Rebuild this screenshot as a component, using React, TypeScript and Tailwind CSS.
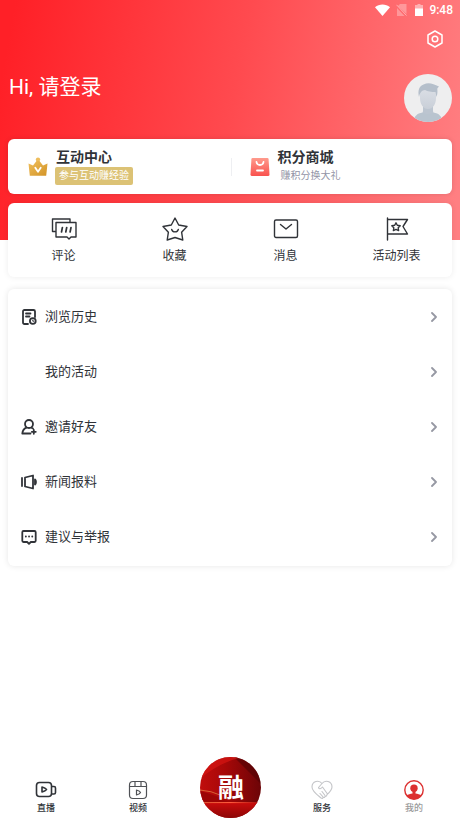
import type { ReactNode } from "react";

type IconProps = { children: ReactNode; className: string; box?: string; width?: number };

function Icon({ children, className, box = "0 0 24 24", width = 1.8 }: IconProps) {
  return (
    <svg
      viewBox={box}
      className={className}
      fill="none"
      stroke="currentColor"
      strokeWidth={width}
      strokeLinecap="round"
      strokeLinejoin="round"
      aria-hidden="true"
    >
      {children}
    </svg>
  );
}

function StatusBar() {
  return (
    <div className="flex h-5 items-center justify-end pr-[7px] text-xs font-medium">
      <svg viewBox="0 0 15 12" className="h-3 w-[15px]" fill="#fff" aria-hidden="true">
        <path d="M0 3.2C4.2-.4 10.8-.4 15 3.2L7.5 12z" />
      </svg>
      <svg viewBox="0 0 11 12" className="ml-[6px] h-3 w-[11px]" aria-hidden="true">
        <path d="M4 0h6.5v10L2 2zM1 4l7.5 8H1z" fill="#fff" opacity=".3" />
        <path d="M.5.8l10 10.7" stroke="#fff" opacity=".45" />
      </svg>
      <svg viewBox="0 0 8 12" className="ml-2 h-3 w-2" fill="#fff" aria-hidden="true">
        <path d="M2.5 0h3v1H8v4H0V1h2.5z" opacity=".45" />
        <path d="M0 4.500h8V12H0z" />
      </svg>
      <span className="ml-[6px]">9:48</span>
    </div>
  );
}

function Avatar() {
  return (
    <svg viewBox="0 0 48 48" className="size-12" role="img" aria-label="头像">
      <defs>
        <clipPath id="face">
          <circle cx="24" cy="24" r="24" />
        </clipPath>
        <linearGradient id="skin" x1="0" y1="0" x2="0" y2="1">
          <stop offset="0" stopColor="#dadee5" />
          <stop offset="1" stopColor="#c9cfd8" />
        </linearGradient>
      </defs>
      <g clipPath="url(#face)">
        <path d="M0 0h48v48H0z" fill="#eeeeef" />
        <path d="M19 30h10v7l1 4-6 3-6-3 1-4z" fill="#bcc5d0" />
        <path d="M10 48c0-6 3-8.500 8.500-9.500q5.500 3 11 0C35 39.500 38 42 38 48z" fill="#b9c4cf" />
        <path d="M16 15h16v9c0 6-3 11-8 11s-8-5-8-11z" fill="url(#skin)" />
        <path d="M15 23c-1.500-6 0-11 4.500-12.500C25 8 29 10 35 12.500c-1 1-1.500 1.500-1.700 2.500.3 3 .2 5-.8 8l-1-5c-4 0-8-.5-10.500-2-3 .5-5 2-6 7z" fill="#b5bfcb" />
      </g>
    </svg>
  );
}

function Crown() {
  return (
    <svg viewBox="0 0 20 20" className="size-5" aria-hidden="true">
      <defs>
        <linearGradient id="gold" x1="0" y1="0" x2="1" y2="1">
          <stop offset="0" stopColor="#f0bf5c" />
          <stop offset="1" stopColor="#d29326" />
        </linearGradient>
      </defs>
      <circle cx="10" cy="2.600" r="2.200" fill="#eebd5c" />
      <path d="M.5 6.500l4.500 2L8.500 4h3L15 8.500l4.500-2-1.300 12.300H1.800z" fill="url(#gold)" />
      <path d="M7.300 10.800l2.700 4 2.700-4" fill="none" stroke="#fff" strokeWidth="1.800" strokeLinecap="round" strokeLinejoin="round" />
    </svg>
  );
}

function Bag() {
  return (
    <svg viewBox="0 0 20 20" className="size-5" aria-hidden="true">
      <defs>
        <linearGradient id="coral" x1="0" y1="0" x2="0" y2="1">
          <stop offset="0" stopColor="#ff9b8d" />
          <stop offset="1" stopColor="#f9524e" />
        </linearGradient>
      </defs>
      <path d="M2.500 1h15q1 0 1.100 1l.9 15.500q0 1.500-1.500 1.500H2Q.5 19 .5 17.500L1.400 2q.1-1 1.100-1z" fill="url(#coral)" />
      <path d="M6.500 5c.5 4 6.500 4 7 0M7 13.500h6" fill="none" stroke="#fff" strokeWidth="1.800" strokeLinecap="round" />
    </svg>
  );
}

const shortcuts: { label: string; icon: ReactNode }[] = [
  {
    label: "评论",
    icon: (
      <Icon className="h-6 w-[26px]" box="0 0 26 24" width={1.4}>
        <path d="M4 14.500H1.500V2H19v3M5 5.500h20V20h-5l-2 2-2-2H5z" />
        <path d="M11.400 10.500l-.9 4.500M15.700 10.500l-.9 4.500M20 10.500l-.9 4.500" strokeWidth="1.700" />
      </Icon>
    ),
  },
  {
    label: "收藏",
    icon: (
      <Icon className="h-6 w-[26px]" box="0 0 26 24" width={1.4}>
        <path d="M13 1l3.700 7L25 9.500l-5.400 5.700 1.200 7.800L13 20.500 5.200 23l1.200-7.800L1 9.500 9.300 8z" />
        <path d="M9.700 12.500c1 3.200 5.600 3.200 6.600 0" />
      </Icon>
    ),
  },
  {
    label: "消息",
    icon: (
      <Icon className="h-6 w-[26px]" box="0 0 26 24" width={1.4}>
        <rect x="1.500" y="3" width="23" height="17.500" rx="1.500" />
        <path d="M7.500 7.500l5.500 4.500 5.500-4.500" />
      </Icon>
    ),
  },
  {
    label: "活动列表",
    icon: (
      <Icon className="h-6 w-[26px]" box="0 0 26 24" width={1.4}>
        <path d="M3.500 1v22M3.500 2.500h20l-4.500 7 4.500 7.500h-20" />
        <path d="M12 5.800l1.300 2.500 2.900.5-2 2 .4 2.800-2.600-1.200-2.600 1.200.4-2.800-2-2 2.900-.5z" />
      </Icon>
    ),
  },
];

const rows: { label: string; icon?: ReactNode }[] = [
  {
    label: "浏览历史",
    icon: (
      <Icon className="size-4" box="0 0 16 16" width={1.8}>
        <path d="M7 15H3.500Q2 15 2 13.500v-11Q2 1 3.500 1h9Q14 1 14 2.500V8M5 4.500h4.500M5 7.500h3.500" />
        <circle cx="11.800" cy="12" r="2.900" />
        <path d="M11.800 11v1.200h1" strokeWidth="1" />
      </Icon>
    ),
  },
  { label: "我的活动" },
  {
    label: "邀请好友",
    icon: (
      <Icon className="size-4" box="0 0 16 16" width={1.8}>
        <circle cx="8" cy="5" r="4" />
        <path d="M5.500 8.700C2.500 10 1.500 12 1.300 14.500h8.200M10.500 8.700l1.500.9M12.800 10.800v4M10.800 12.800h4" />
      </Icon>
    ),
  },
  {
    label: "新闻报料",
    icon: (
      <Icon className="size-4" box="0 0 16 16" width={1.8}>
        <path d="M4 3.500L12 1.500v13L4 12.500zM1 4v8M14 5.500c1.300 1 1.300 4 0 5z" />
      </Icon>
    ),
  },
  {
    label: "建议与举报",
    icon: (
      <Icon className="size-4" box="0 0 16 16" width={1.8}>
        <path d="M2.500 2h11q1.200 0 1.200 1.200v8.600q0 1.200-1.200 1.200h-3.700L8 14.800 6.200 13H2.500q-1.200 0-1.200-1.200V3.200Q1.300 2 2.500 2z" />
        <path d="M4.800 7.500h.1M8 7.500h.1M11.200 7.500h.1" />
      </Icon>
    ),
  },
];

function Emblem() {
  return (
    <svg viewBox="0 0 61 61" className="size-[61px]" role="img" aria-label="融">
      <defs>
        <clipPath id="disc">
          <circle cx="30.500" cy="30.500" r="30.500" />
        </clipPath>
        <linearGradient id="ruby" x1="0" y1="0" x2="1" y2="0">
          <stop offset="0" stopColor="#c00d0d" />
          <stop offset=".4" stopColor="#a80808" />
          <stop offset="1" stopColor="#6c0407" />
        </linearGradient>
        <linearGradient id="floor" x1="0" y1="0" x2="0" y2="1">
          <stop offset="0" stopColor="#cc0c0c" />
          <stop offset="1" stopColor="#8c0606" />
        </linearGradient>
        <linearGradient id="glow" x1="0" y1="0" x2="1" y2="0">
          <stop offset="0" stopColor="#d9542f" />
          <stop offset=".5" stopColor="#ff5a3c" />
          <stop offset="1" stopColor="#a80808" />
        </linearGradient>
      </defs>
      <g clipPath="url(#disc)">
        <path d="M0 0h61v61H0z" fill="url(#ruby)" />
        <path d="M34 0l27 27V0z" fill="#500205" opacity=".6" />
        <path d="M0 22Q18 6 42 0H12L0 8z" fill="#d51512" opacity=".7" />
        <path d="M0 34q14 3 30 12H0z" fill="#9c0505" />
        <path d="M0 45h61v16H0z" fill="url(#floor)" />
        <path d="M0 33q12 1 20 5" fill="none" stroke="#e0793f" strokeWidth=".8" />
        <path d="M0 45.500h61v.1H0z" fill="none" stroke="url(#glow)" />
      </g>
      <text
        x="31"
        y="40"
        textAnchor="middle"
        fill="#fff"
        className="font-['Noto_Sans_CJK_SC',sans-serif] text-[26px] font-bold"
      >
        融
      </text>
    </svg>
  );
}

const navLink = "flex flex-col items-center pb-1 text-[9px] leading-3 font-medium";

export default function App() {
  return (
    <div className="flex min-h-screen flex-col bg-white font-[Roboto,'Noto_Sans_CJK_SC',sans-serif] text-[#303338]">
      <header className="h-60 bg-[linear-gradient(100deg,#ff2027_3%,#ff4a4f_50%,#ff7f82_98%)] text-white">
        <StatusBar />
        <div className="flex h-[119px] justify-between pr-2 pl-[9px]">
          <h1 className="pt-[51px] text-[21px] leading-8">Hi, 请登录</h1>
          <div className="flex flex-col items-end pt-[10px]">
            <button type="button" aria-label="设置" className="mr-2">
              <Icon className="size-[18px]" box="0 0 18 18" width={1.5}>
                <path d="M9 1l7 4v8l-7 4-7-4V5z" />
                <circle cx="9" cy="9" r="2.800" />
              </Icon>
            </button>
            <div className="mt-[26px]">
              <Avatar />
            </div>
          </div>
        </div>
        <section className="mx-2 flex h-[55px] items-center rounded-md bg-white text-[#303338] shadow-[0_0_5px_rgba(0,0,0,0.12)]">
          <button type="button" className="flex flex-1 items-center gap-2 pl-5 text-left">
            <Crown />
            <span className="flex flex-col items-start">
              <span className="text-sm leading-[19px] font-bold">互动中心</span>
              <span className="-ml-px rounded-xs bg-[#dcc275] px-1 text-[10px] leading-[18px] text-white">参与互动赚经验</span>
            </span>
          </button>
          <span className="h-[18px] w-px bg-[#eeeff2]" />
          <button type="button" className="flex flex-1 items-center gap-2 pl-[18px] text-left">
            <Bag />
            <span className="flex flex-col items-start">
              <span className="text-sm leading-[19px] font-bold">积分商城</span>
              <span className="pl-[3px] text-[10px] leading-[18px] text-[#9294a6]">赚积分换大礼</span>
            </span>
          </button>
        </section>
      </header>

      <section className="mx-2 -mt-[37px] grid h-[74px] grid-cols-4 rounded-md bg-white shadow-[0_0_6px_rgba(0,0,0,0.08)]">
        {shortcuts.map((s) => (
          <button key={s.label} type="button" className="flex flex-col items-center pt-[14px] text-xs leading-[18px]">
            {s.icon}
            <span className="mt-[6px]">{s.label}</span>
          </button>
        ))}
      </section>

      <ul className="mx-2 mt-3 rounded-md bg-white pb-[2px] shadow-[0_0_6px_rgba(0,0,0,0.1)]">
        {rows.map((r) => (
          <li key={r.label}>
            <button type="button" className="flex h-[55px] w-full items-center px-[13px] text-[13px]">
              <span className="mr-2 size-4">{r.icon}</span>
              {r.label}
              <Icon className="ml-auto size-[10px] text-[#9698a3]" box="0 0 10 10" width={1.8}>
                <path d="M3 1l4 4-4 4" />
              </Icon>
            </button>
          </li>
        ))}
      </ul>

      <nav className="mt-auto grid grid-cols-5 items-end">
        <a href="#live" className={navLink}>
          <Icon className="mb-[2px] h-5 w-[22px]" box="0 0 22 20" width={1.6}>
            <rect x="1.500" y="2.500" width="15" height="14" rx="3" />
            <path d="M17 6.500h2q1.500 0 1.500 1.500v4.500q0 1.500-1.500 1.500h-2M7 7v5q3.500-1 4.500-2.500Q10.500 8 7 7z" />
          </Icon>
          直播
        </a>
        <a href="#video" className={navLink}>
          <Icon className="mb-[2px] h-5 w-[22px] text-[#505256]" box="0 0 22 20" width={1.2}>
            <rect x="2.500" y="1.500" width="17" height="17" rx="3.500" />
            <path d="M2.500 6.500h17M8 1.500v5M14 1.500v5M9.500 10v5q3.500-1 4-2.500-.5-1.500-4-2.500z" />
          </Icon>
          视频
        </a>
        <a href="#home" className="flex justify-center">
          <Emblem />
        </a>
        <a href="#service" className={navLink}>
          <Icon className="mb-[2px] h-5 w-[22px] text-[#c4c5c8]" box="0 0 22 20" width={1.1}>
            <path d="M11 3.500C8-.5 1 1 1 7c0 4.500 5.500 8 9.500 11.300q1.500.5 1.500-1 1.700.7 2-1 1.700.3 1.800-1.400C19 12 21 10 21 7c0-6-7-7.500-10-3.500L7.500 7.500c.5 2 2.500 1.500 4-.5l5 7M9 13.500l3 3.300M11 11.500l3 4" />
          </Icon>
          服务
        </a>
        <a
          href="#mine"
          aria-current="page"
          className="flex flex-col items-center pb-1 text-[9px] leading-3 font-medium text-[#9a9a9a]"
        >
          <svg viewBox="0 0 22 20" className="mb-[2px] h-5 w-[22px]" aria-hidden="true">
            <circle cx="11" cy="10" r="9.200" fill="#fff" stroke="#dc3030" strokeWidth="1.400" />
            <circle cx="11" cy="8.300" r="3.700" fill="#dc3030" />
            <path d="M9.500 11h3v2.500c2 .3 4.500.8 6 1.800a9 9 0 0 1-15 0c1.500-1 4-1.500 6-1.800z" fill="#dc3030" />
          </svg>
          我的
        </a>
      </nav>
    </div>
  );
}
